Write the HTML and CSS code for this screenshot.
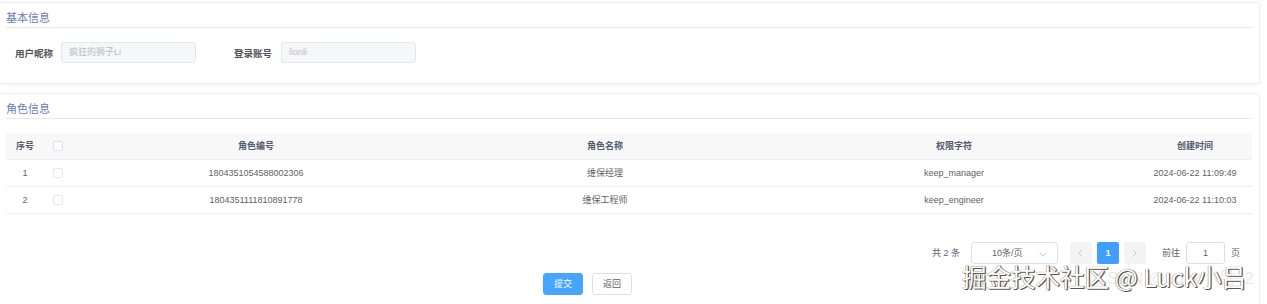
FILE: index.html
```html
<!DOCTYPE html>
<html lang="zh">
<head>
<meta charset="utf-8">
<link rel="stylesheet" href="styles.css">
</head>
<body>
<div class="page">
  <section class="card card-basic">
    <h3 class="card-title">基本信息</h3>
    <div class="form-row">
      <div class="form-item">
        <label class="form-label">用户昵称</label>
        <div class="input disabled">疯狂的狮子Li</div>
      </div>
      <div class="form-item">
        <label class="form-label">登录账号</label>
        <div class="input disabled">lionli</div>
      </div>
    </div>
  </section>

  <section class="card card-role">
    <h3 class="card-title">角色信息</h3>
    <table class="table">
      <colgroup>
        <col class="c1"><col class="c2"><col class="c3"><col class="c4"><col class="c5"><col class="c6">
      </colgroup>
      <thead>
        <tr><th>序号</th><th><span class="checkbox"></span></th><th>角色编号</th><th>角色名称</th><th>权限字符</th><th>创建时间</th></tr>
      </thead>
      <tbody>
        <tr><td>1</td><td><span class="checkbox"></span></td><td>1804351054588002306</td><td>维保经理</td><td>keep_manager</td><td>2024-06-22 11:09:49</td></tr>
        <tr><td>2</td><td><span class="checkbox"></span></td><td>1804351111810891778</td><td>维保工程师</td><td>keep_engineer</td><td>2024-06-22 11:10:03</td></tr>
      </tbody>
    </table>

    <div class="pagination">
      <span class="total">共 2 条</span>
      <div class="select">10条/页
        <svg class="arrow" width="8" height="5" viewBox="0 0 8 5"><path d="M0.5 0.5 L4 4 L7.5 0.5" fill="none" stroke="#c0c4cc" stroke-width="0.9"/></svg>
      </div>
      <div class="pager">
        <span class="pbtn"><svg width="5" height="8" viewBox="0 0 5 8"><path d="M4 0.5 L1 4 L4 7.5" fill="none" stroke="#c0c4cc" stroke-width="0.9"/></svg></span>
        <span class="pbtn active">1</span>
        <span class="pbtn"><svg width="5" height="8" viewBox="0 0 5 8"><path d="M1 0.5 L4 4 L1 7.5" fill="none" stroke="#c0c4cc" stroke-width="0.9"/></svg></span>
      </div>
      <span class="goto">前往</span>
      <div class="jump">1</div>
      <span class="goto">页</span>
    </div>

    <div class="footer">
      <button class="btn primary">提交</button>
      <button class="btn">返回</button>
    </div>
  </section>

  <div class="watermark-faint">CSDN @Luck小吕_2</div>
  <div class="watermark">掘金技术社区 @ Luck小吕</div>
</div>
</body>
</html>
```

FILE: styles.css
```css
* { box-sizing: border-box; }
html, body { margin: 0; padding: 0; background: #fff; }
body {
  font-family: "Helvetica Neue", "Liberation Sans", "Noto Sans CJK SC", sans-serif;
  color: #606266;
  width: 1267px;
  height: 304px;
  overflow: hidden;
}
.page {
  position: relative;
  padding: 2px 7px 0 0;
  height: 304px;
}
.card {
  margin-left: -1px;
  border: 1px solid #ebeef5;
  border-radius: 3px;
  background: #fff;
  box-shadow: 0 1px 4px rgba(0,0,0,0.05);
  padding: 0 7px 0 6px;
}
.card-basic { height: 82px; }
.card-role { margin-top: 9px; height: 220px; }
.card-title {
  margin: 0;
  font-weight: normal;
  font-size: 11px;
  line-height: 14px;
  color: #6c7bb5;
  padding-top: 8px;
  padding-bottom: 2px;
  border-bottom: 1px solid #e6e8ee;
}
.form-row {
  display: flex;
  gap: 38px;
  padding-top: 14px;
}
.form-item { display: flex; align-items: center; }
.form-label {
  font-size: 9.5px;
  font-weight: bold;
  color: #505257;
  width: 55px;
  padding-left: 9px;
}
.form-item + .form-item .form-label { width: 47px; padding-left: 0; }
.input {
  width: 135px;
  height: 21px;
  border: 1px solid #e4e7ed;
  border-radius: 3px;
  background: #f5f7fa;
  color: #b8bcc4;
  font-size: 9px;
  line-height: 19px;
  padding-left: 7px;
}
.table {
  margin-top: 14px;
  width: 1246px;
  border-collapse: collapse;
  table-layout: fixed;
  font-size: 9px;
  color: #606266;
}
.c1 { width: 38px; }
.c2 { width: 28px; }
.c3 { width: 368px; }
.c4 { width: 330px; }
.c5 { width: 368px; }
.c6 { width: 114px; }
.table th {
  background: #f8f8f9;
  color: #515a6e;
  font-weight: bold;
  height: 26px;
  border-bottom: 1px solid #ebeef5;
  text-align: center;
  padding: 0;
}
.table td {
  height: 27px;
  border-bottom: 1px solid #ebeef5;
  text-align: center;
  padding: 0;
}
.table th:nth-child(2), .table td:nth-child(2) { text-align: left; padding-left: 9px; }
.checkbox {
  display: inline-block;
  width: 10px;
  height: 10px;
  border: 1px solid #e4e7ed;
  border-radius: 2px;
  background: #fff;
  vertical-align: middle;
}
.table th .checkbox { border-color: #dcdfe6; }
.pagination {
  display: flex;
  align-items: center;
  justify-content: flex-end;
  margin-top: 28px;
  padding-right: 12px;
  font-size: 9px;
  color: #606266;
  height: 22px;
}
.total { margin-right: 11px; }
.select {
  position: relative;
  width: 87px;
  height: 22px;
  border: 1px solid #dcdfe6;
  border-radius: 3px;
  line-height: 20px;
  padding-left: 20px;
  margin-right: 12px;
}
.select .arrow { position: absolute; right: 10px; top: 9px; }
.pager { display: flex; gap: 5px; margin-right: 16px; }
.pbtn {
  width: 22px;
  height: 22px;
  background: #f4f4f5;
  border-radius: 2px;
  display: flex;
  align-items: center;
  justify-content: center;
  font-weight: bold;
  color: #606266;
}
.pbtn.active { background: #409eff; color: #fff; }
.goto { color: #606266; }
.jump {
  width: 39px;
  height: 22px;
  border: 1px solid #dcdfe6;
  border-radius: 3px;
  text-align: center;
  line-height: 20px;
  margin: 0 6px;
}
.footer {
  display: flex;
  gap: 9px;
  padding-left: 537px;
  margin-top: 9px;
}
.btn {
  width: 40px;
  height: 22px;
  border: 1px solid #dcdfe6;
  border-radius: 3px;
  background: #fff;
  color: #606266;
  font-family: inherit;
  font-size: 9px;
  padding: 0;
}
.btn.primary { background: #46a6ff; border-color: #46a6ff; color: #fff; }
.watermark {
  position: absolute;
  left: 962px;
  top: 262px;
  font-family: "Noto Sans CJK SC", sans-serif;
  font-size: 24.5px;
  line-height: 30px;
  color: #fff;
  text-shadow: 1px 1px 0 #555, -0.5px -0.5px 0 #888, 1px 0 1px #444;
  white-space: nowrap;
}
.watermark-faint {
  position: absolute;
  left: 1095px;
  top: 268px;
  font-family: "Liberation Sans", "Noto Sans CJK SC", sans-serif;
  font-size: 17px;
  line-height: 22px;
  color: rgba(180,180,180,0.3);
  white-space: nowrap;
}
```
